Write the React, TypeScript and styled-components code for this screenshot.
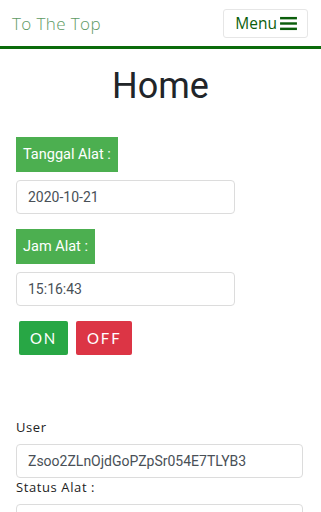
import styled, { createGlobalStyle } from "styled-components";

const GlobalStyle = createGlobalStyle`
  body {
    margin: 0;
    background: #fff;
    font-family: Roboto, "Liberation Sans", sans-serif;
  }
`;

const App: React.FC = () => {
  return (
    <>
      <GlobalStyle />
      <Header>
        <Brand>To The Top</Brand>
        <MenuButton>
          Menu
          <svg width="17" height="15" viewBox="0 0 18 16">
            <rect x="0" y="1" width="18" height="2.6" fill="#0b5e0b" />
            <rect x="0" y="6.7" width="18" height="2.6" fill="#0b5e0b" />
            <rect x="0" y="12.4" width="18" height="2.6" fill="#0b5e0b" />
          </svg>
        </MenuButton>
      </Header>
      <Main>
        <Title>Home</Title>
        <Label>Tanggal Alat :</Label>
        <Field $width="219px" readOnly value="2020-10-21" />
        <Label>Jam Alat :</Label>
        <Field $width="219px" readOnly value="15:16:43" />
        <Buttons>
          <Toggle $color="#28a745">ON</Toggle>
          <Toggle $color="#dc3545">OFF</Toggle>
        </Buttons>
        <Caption>User</Caption>
        <Field $width="287px" readOnly value="Zsoo2ZLnOjdGoPZpSr054E7TLYB3" />
        <Caption $tight>Status Alat :</Caption>
        <Field $width="287px" readOnly value="" />
      </Main>
    </>
  );
};

const Header = styled.header`
  display: flex;
  align-items: center;
  justify-content: space-between;
  height: 46px;
  padding: 0 13px 0 12px;
  border-bottom: 3px solid #0b6b0b;
`;

const Brand = styled.span`
  font-family: "Open Sans", sans-serif;
  font-weight: 300;
  font-size: 17px;
  letter-spacing: 0.4px;
  color: #5e9a64;
`;

const MenuButton = styled.button`
  display: flex;
  align-items: center;
  gap: 3px;
  height: 29px;
  padding: 0 10px 0 11px;
  background: #fff;
  border: 1px solid #e6e6e6;
  border-radius: 3px;
  font-family: "Open Sans", sans-serif;
  font-size: 15.5px;
  color: #0b5e0b;
`;

const Main = styled.main`
  padding: 0 16px;
`;

const Title = styled.h1`
  margin: 16px 0 30px;
  text-align: center;
  font-family: Roboto, sans-serif;
  font-weight: 400;
  font-size: 36px;
  line-height: 42px;
  color: #212529;
`;

const Label = styled.div`
  display: inline-block;
  padding: 8px 7px;
  background: #4caf50;
  color: #fff;
  font-size: 14.5px;
  line-height: 19px;
  margin-bottom: 8px;
`;

interface IField {
  $width: string;
}

const Field = styled.input<IField>`
  display: block;
  box-sizing: border-box;
  width: ${(p) => p.$width};
  height: 34px;
  padding: 0 11px;
  margin-bottom: 15px;
  border: 1px solid #dcdcdc;
  border-radius: 4px;
  font-family: Roboto, sans-serif;
  font-size: 14px;
  color: #495057;
  outline: none;
`;

const Buttons = styled.div`
  display: flex;
  gap: 8px;
  padding-left: 3px;
  margin-bottom: 63px;
`;

interface IToggle {
  $color: string;
}

const Toggle = styled.button<IToggle>`
  height: 34px;
  padding: 0 11px;
  border: none;
  border-radius: 2px;
  background: ${(p) => p.$color};
  color: #fff;
  font-family: Lato, sans-serif;
  font-size: 15px;
  letter-spacing: 1.8px;
`;

const Caption = styled.div<{ $tight?: boolean }>`
  font-family: "Open Sans", sans-serif;
  font-size: 13px;
  letter-spacing: 0.6px;
  color: #222;
  margin: ${(p) => (p.$tight ? "-15px 0 8px" : "0 0 8px")};
`;

export default App;
